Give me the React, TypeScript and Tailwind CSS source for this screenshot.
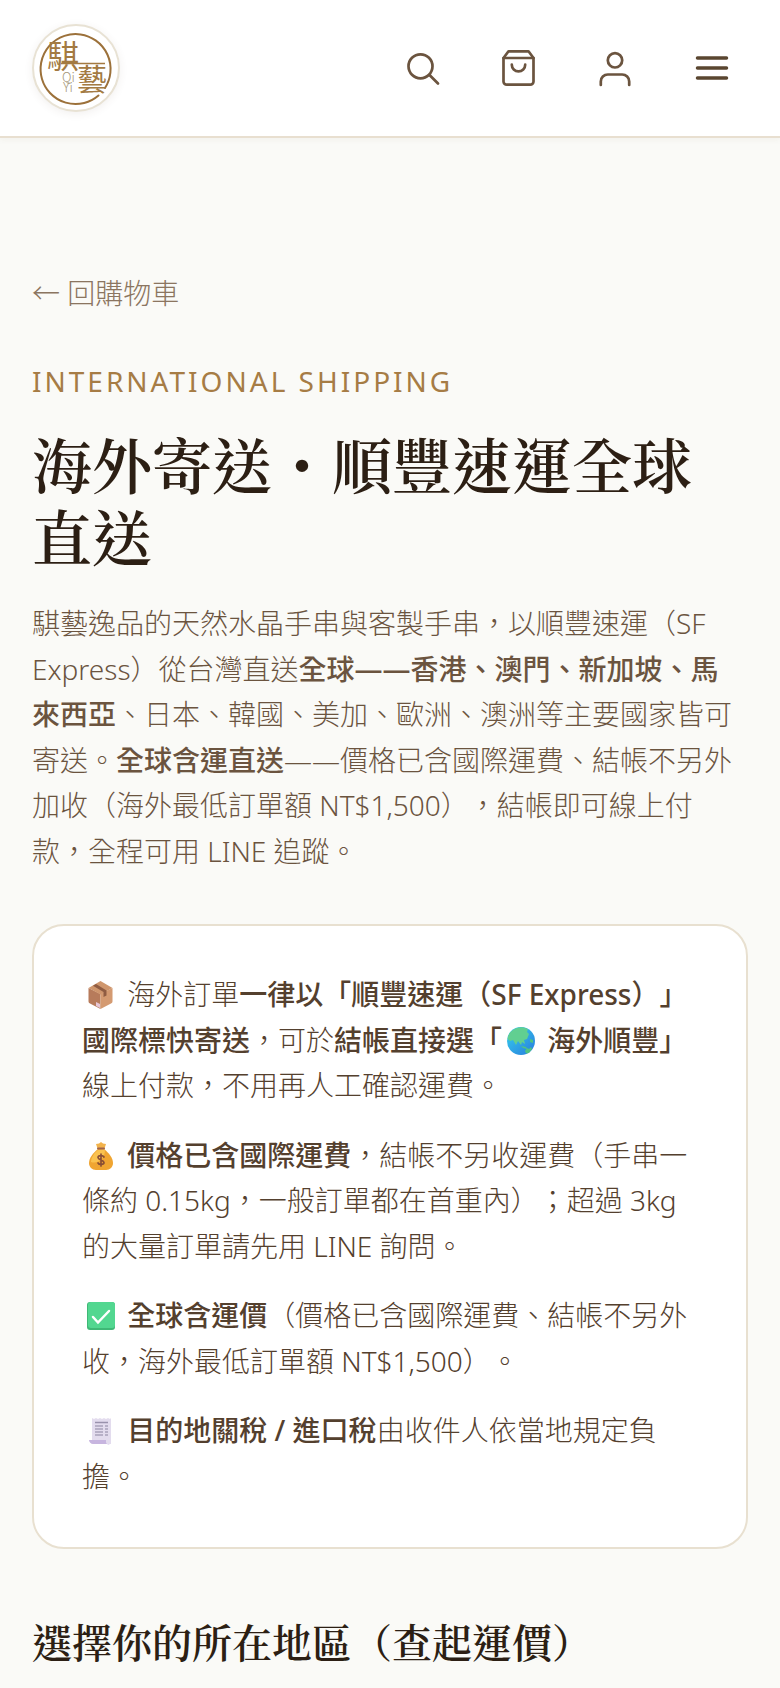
import type { ReactNode } from 'react';

interface IconProps {
  children: ReactNode;
  label: string;
  color: string;
  strokeWidth: number;
}

// === Header buttons ===
function IconButton({ children, label, color, strokeWidth }: IconProps) {
  return (
    <button type="button" aria-label={label} className={`flex h-20 w-20 items-center justify-center ${color}`}>
      <svg
        viewBox="0 0 40 40"
        className="h-10 w-10"
        fill="none"
        stroke="currentColor"
        strokeWidth={strokeWidth}
        strokeLinecap="round"
        strokeLinejoin="round"
      >
        {children}
      </svg>
    </button>
  );
}

function Logo() {
  return (
    <a
      href="#home"
      aria-label="騏藝"
      className="flex h-22 w-22 items-center justify-center rounded-full border-2 border-[#e8e2d4] bg-white shadow-[0_2px_8px_rgba(90,70,48,0.08)]"
    >
      <svg viewBox="0 0 84 84" className="h-21 w-21 font-['Noto_Sans_CJK_TC',sans-serif]" fill="#a37a42">
        <path
          d="M64.5 69.5A35 35 0 1 1 71 62"
          fill="none"
          stroke="#9c713a"
          strokeWidth="2"
          strokeLinecap="round"
        />
        <path d="M27 37.5H71" stroke="#a37a42" strokeWidth="1.5" />
        <text x="13" y="42" fontSize="32" fontWeight="400">騏</text>
        <text x="43" y="64" fontSize="30" fontWeight="400">藝</text>
        <text x="28" y="56" fontSize="13" fontWeight="300" fill="#a39678">Qi</text>
        <text x="29" y="66" fontSize="13" fontWeight="300" fill="#a39678">Yi</text>
      </svg>
    </a>
  );
}

// === Inline emoji ===
function Emoji({ label, children }: { label: string; children: ReactNode }) {
  return (
    <svg
      role="img"
      aria-label={label}
      viewBox="0 0 28 28"
      className="mx-[5px] inline-block h-7 w-7 align-[-4px]"
      fill="none"
    >
      {children}
    </svg>
  );
}

function PackageEmoji() {
  return (
    <Emoji label="📦">
      <path d="M1.5 7 13.5 13v15L3 22.5q-1.5-.5-1.5-2Z" fill="#b77b5b" />
      <path d="M25.5 7 13.5 13v15L24 22.5q1.5-.5 1.5-2Z" fill="#d49a71" />
      <path d="M1.5 7 13.5 0l12 7-12 6.500Z" fill="#cf966d" />
      <path d="m6 4.800 3-1.800 10.500 6.500v5l-3 1.500v-5Z" fill="#8f5c42" />
      <path d="m9 21 4 2v4l-4-2Z" fill="#e6c5d3" />
    </Emoji>
  );
}

function GlobeEmoji() {
  return (
    <Emoji label="🌏">
      <defs>
        <linearGradient id="sea" x1="4" y1="4" x2="24" y2="25" gradientUnits="userSpaceOnUse">
          <stop stopColor="#35c5ea" />
          <stop offset="1" stopColor="#2a86df" />
        </linearGradient>
      </defs>
      <circle cx="14" cy="14" r="14" fill="url(#sea)" />
      <path
        d="M3 5.500Q8 0 16 .2L21 2l-1 3 2 2-2 5-3 1 1 4-3-2-1 3-3-4-2 4-3-5-3 1-2.500-2Q.5 9 3 5.500Z"
        fill="#61cf91"
      />
      <path d="m14 19 5 1 1 2-4-1ZM18 24l2-3 2 1 2-2 1 2-3 4-3 .5ZM23 12l3 1v3l-3-1Z" fill="#4fc383" />
    </Emoji>
  );
}

function MoneyEmoji() {
  return (
    <Emoji label="💰">
      <path d="m9 2 3-.5L14 0l2 1.500 3 .5-2 6h-6Z" fill="#f2b34c" />
      <path d="M11 7h6c5 4 9 9 9 14 0 4-3 7-7 7H9c-4 0-7-3-7-7 0-5 4-10 9-14Z" fill="#f0a531" />
      <path d="M11 8c-4 3-7 8-7 12 6 2 13-2 14-11l-1-2Z" fill="#fac24f" />
      <path d="M11 6.500h6" stroke="#9f624b" strokeWidth="2" strokeLinecap="round" />
      <path
        d="M17 15c-1-2-6-2-6 .5s6 2.500 6 5-5 2.500-6 .5M14 12v12"
        stroke="#8a4f35"
        strokeWidth="1.7"
        strokeLinecap="round"
      />
    </Emoji>
  );
}

function CheckEmoji() {
  return (
    <Emoji label="✅">
      <rect width="28" height="28" rx="3" fill="#3fb876" />
      <rect x="1" width="27" height="26" rx="3" fill="#52d790" />
      <path d="m6 15 5 5.500L22 9" stroke="#fff" strokeWidth="2.5" strokeLinecap="round" />
    </Emoji>
  );
}

function ReceiptEmoji() {
  return (
    <Emoji label="🧾">
      <path d="m5 1 2 1 2-1 2 1 2-1 2 1 2-1 2 1 2-1 2 1 1-1v26H7l-2-3Z" fill="#e3dcee" />
      <path d="M2 23h17v2c0 2 2 3 4 2H6c-2 0-4-2-4-4Z" fill="#c7b5df" />
      <path d="M8 5.500h13" stroke="#9992ac" strokeWidth="1.5" />
      <path
        d="M8 9h8M18 9h3M8 12h8M18 12h3M8 15h8M18 15h3M8 18h8M18 18h3"
        stroke="#a9a1bb"
        strokeWidth="1.5"
      />
    </Emoji>
  );
}

export default function App() {
  return (
    <div
      lang="zh-Hant"
      className="min-h-screen bg-[#fafaf7] font-['Noto_Sans','Noto_Sans_CJK_TC',sans-serif] text-[28px] font-light text-[#6b543f] [text-spacing-trim:space-all]"
    >
      <header className="flex items-center justify-between border-b-2 border-[#e8dfd0] bg-white py-6 pr-7 pl-8 shadow-[0_2px_6px_rgba(90,70,48,0.05)]">
        <Logo />
        <nav className="-my-6 flex items-center gap-4">
          <IconButton label="搜尋" color="text-[#6b543f]" strokeWidth={2.7}>
            <circle cx="16.5" cy="18.3" r="12" />
            <path d="m25.500 27 8.500 8.500" />
          </IconButton>
          <IconButton label="購物車" color="text-[#6b543f]" strokeWidth={2.7}>
            <path d="M8.500 3.300 3.500 10v23.300a3.300 3.300 0 0 0 3.300 3.400h23.400a3.300 3.300 0 0 0 3.300-3.400V10l-5-6.700Z" />
            <path d="M3.500 10h30M25.200 16.700a6.700 6.700 0 0 1-13.400 0" />
          </IconButton>
          <IconButton label="會員" color="text-[#6b543f]" strokeWidth={2.7}>
            <circle cx="19" cy="12.3" r="7.2" />
            <path d="M33.200 37v-3.500a7 7 0 0 0-7-7H11.800a7 7 0 0 0-7 7V37" />
          </IconButton>
          <IconButton label="選單" color="text-[#5a4630]" strokeWidth={3.5}>
            <path d="M5.500 10h29M5.500 20h29M5.500 30h29" />
          </IconButton>
        </nav>
      </header>

      <main className="px-8 pt-[135px]">
        <a href="#cart" className="block leading-10 text-[#8b7560]">← 回購物車</a>

        <p className="mt-12 leading-10 font-normal tracking-[3px] text-[#a67c45]">INTERNATIONAL SHIPPING</p>
        <h1 className="mt-[26px] font-['Noto_Serif_CJK_TC','Noto_Serif_TC','Noto_Sans_CJK_TC',serif] text-[60px] leading-[72px] font-semibold text-[#2c1f14]">
          海外寄送・順豐速運全球直送
        </h1>

        <p className="mt-[30px] pr-1 leading-relaxed">
          騏藝逸品的天然水晶手串與客製手串，以順豐速運（SF Express）從台灣直送
          <strong className="font-medium">全球——香港、澳門、新加坡、馬來西亞</strong>
          、日本、韓國、美加、歐洲、澳洲等主要國家皆可寄送。
          <strong className="font-medium">全球含運直送</strong>
          ——價格已含國際運費、結帳不另外加收（海外最低訂單額 NT$1,500），結帳即可線上付款，全程可用 LINE 追蹤。
        </p>

        <section className="mt-[50px] space-y-6 rounded-[32px] border-2 border-[#e8e0d0] bg-white px-12 pt-[46px] pb-12 leading-relaxed text-[#54402e]">
          <p>
            <PackageEmoji /> 海外訂單
            <strong className="font-medium">一律以「順豐速運（SF Express）」國際標快寄送</strong>，可於
            <strong className="font-medium">結帳直接選「<GlobeEmoji /> 海外順豐」</strong>
            線上付款，不用再人工確認運費。
          </p>
          <p>
            <MoneyEmoji /> <strong className="font-medium">價格已含國際運費</strong>
            ，結帳不另收運費（手串一條約 0.15kg，一般訂單都在首重內）；超過 3kg 的大量訂單請先用 LINE 詢問。
          </p>
          <p>
            <CheckEmoji /> <strong className="font-medium">全球含運價</strong>
            （價格已含國際運費、結帳不另外收，海外最低訂單額 NT$1,500）。
          </p>
          <p>
            <ReceiptEmoji /> <strong className="font-medium">目的地關稅 / 進口稅</strong>
            由收件人依當地規定負擔。
          </p>
        </section>

        <h2 className="mt-16 font-['Noto_Serif_CJK_TC','Noto_Serif_TC','Noto_Sans_CJK_TC',serif] text-[40px] leading-[56px] font-semibold text-[#2c1f14]">
          選擇你的所在地區（查起運價）
        </h2>
      </main>
    </div>
  );
}
